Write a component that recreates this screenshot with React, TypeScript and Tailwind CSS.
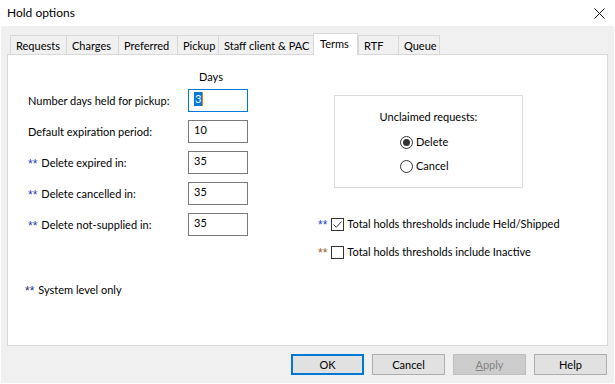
import React from 'react';

const tabs = [
  { label: 'Requests', w: 'w-[56px]' },
  { label: 'Charges', w: 'w-[52px]' },
  { label: 'Preferred', w: 'w-[59px]' },
  { label: 'Pickup', w: 'w-[41px]' },
  { label: 'Staff client & PAC', w: 'w-[95px]' },
  { label: 'Terms', w: 'w-[45px]', active: true },
  { label: 'RTF', w: 'w-[40px]' },
  { label: 'Queue', w: 'w-[42px]', last: true },
];

const dayRows = [
  { label: 'Number days held for pickup:', value: '3', focused: true },
  { label: 'Default expiration period:', value: '10' },
  { label: 'Delete expired in:', value: '35', sys: true },
  { label: 'Delete cancelled in:', value: '35', sys: true },
  { label: 'Delete not-supplied in:', value: '35', sys: true },
];

const Stars = ({ color = 'text-[#1f3fb0]' }: { color?: string }) => (
  <span
    className={`${color} text-[12px] leading-[12px] mr-[4px] pt-[2px]`}
    style={{ fontFamily: '"Liberation Sans", sans-serif' }}
  >
    **
  </span>
);

const Radio = ({ checked, label }: { checked?: boolean; label: string }) => (
  <div className="flex items-center h-[16px]">
    <span className="w-[13px] h-[13px] rounded-full border border-[#333] bg-white flex items-center justify-center">
      {checked && <span className="w-[7px] h-[7px] rounded-full bg-[#333]" />}
    </span>
    <span className="ml-[3px]">{label}</span>
  </div>
);

const Check = ({ checked }: { checked?: boolean }) => (
  <span className="w-[13px] h-[13px] border border-[#333] bg-white flex items-center justify-center">
    {checked && (
      <svg width="11" height="11" viewBox="0 0 11 11">
        <path d="M1.5 5.5 L4.3 8.3 L9.5 2.5" fill="none" stroke="#333" strokeWidth="1" />
      </svg>
    )}
  </span>
);

export default function App() {
  return (
    <div
      className="w-[615px] h-[384px] bg-[#f0f0f0] text-[11px] text-black leading-[16px] flex flex-col border-x border-b border-white whitespace-nowrap"
      style={{ fontFamily: 'Lato, "Noto Sans", sans-serif' }}
    >
      {/* title bar */}
      <div className="h-[26px] bg-white flex items-center justify-between pl-[7px] pr-[10px] -mx-px">
        <span className="text-[12px]">Hold options</span>
        <svg width="11" height="11" viewBox="0 0 11 11">
          <path d="M0.5 0.5 L10.5 10.5 M10.5 0.5 L0.5 10.5" stroke="#111" strokeWidth="1" />
        </svg>
      </div>

      {/* tabs */}
      <div className="flex items-end h-[21px] mt-[7px] ml-[9px] relative z-10">
        {tabs.map((t) =>
          t.active ? (
            <div
              key={t.label}
              className={`${t.w} h-[22px] bg-white border border-b-0 border-[#d9d9d9] pl-[6px] pt-[2px] -mb-px`}
            >
              {t.label}
            </div>
          ) : (
            <div
              key={t.label}
              className={`${t.w} h-[19px] bg-[#f0f0f0] border-t border-l ${t.last ? 'border-r' : ''} border-[#d9d9d9] pl-[5px] pt-[2px]`}
            >
              {t.label}
            </div>
          )
        )}
      </div>

      {/* panel */}
      <div className="mx-[6px] h-[292px] bg-white border border-[#d9d9d9] flex flex-col">
        <div className="flex">
          {/* left column */}
          <div className="ml-[20px] w-[220px] pt-[14px]">
            <div className="pl-[171px]">Days</div>
            <div className="mt-[4px] flex flex-col gap-[8px]">
              {dayRows.map((r) => (
                <div key={r.label} className="flex items-center h-[23px]">
                  <div className="w-[160px] flex items-center">
                    {r.sys && <Stars />}
                    <span>{r.label}</span>
                  </div>
                  <div
                    className={`w-[60px] h-[23px] bg-white border ${
                      r.focused ? 'border-[#0078d7]' : 'border-[#7a7a7a]'
                    } pl-[5px] pt-[2px] flex items-start`}
                  >
                    {r.focused ? (
                      <span className="flex">
                        <span className="bg-[#0078d7] text-white px-[1px] leading-[14px]">{r.value}</span>
                        <span className="w-px h-[14px] bg-[#e0801a]" />
                      </span>
                    ) : (
                      <span className="leading-[14px]">{r.value}</span>
                    )}
                  </div>
                </div>
              ))}
            </div>
          </div>

          {/* right column */}
          <div className="ml-[70px] pt-[40px]">
            <div className="ml-[16px] w-[189px] h-[93px] border border-[#dcdcdc] pt-[13px]">
              <div className="text-center">Unclaimed requests:</div>
              <div className="pl-[65px] mt-[9px] flex flex-col gap-[8px]">
                <Radio checked label="Delete" />
                <Radio label="Cancel" />
              </div>
            </div>
            <div className="mt-[28px] flex flex-col gap-[12px]">
              <div className="flex items-center h-[16px]">
                <Stars />
                <Check checked />
                <span className="ml-[3px]">Total holds thresholds include Held/Shipped</span>
              </div>
              <div className="flex items-center h-[16px]">
                <Stars color="text-[#9a5a20]" />
                <Check />
                <span className="ml-[3px]">Total holds thresholds include Inactive</span>
              </div>
            </div>
          </div>
        </div>

        <div className="ml-[17px] mt-[22px] flex items-center">
          <Stars color="text-[#1a2a80]" />
          <span>System level only</span>
        </div>
      </div>

      {/* buttons */}
      <div className="mt-[8px] flex justify-end gap-[8px] pr-[7px]">
        <button className="w-[73px] h-[21px] bg-[#e1e1e1] border-2 border-[#0078d7]">OK</button>
        <button className="w-[73px] h-[21px] bg-[#e1e1e1] border border-[#adadad]">Cancel</button>
        <button className="w-[73px] h-[21px] bg-[#cccccc] border border-[#bfbfbf] text-[#838383]">
          <span className="underline">A</span>pply
        </button>
        <button className="w-[73px] h-[21px] bg-[#e1e1e1] border border-[#adadad]">Help</button>
      </div>
    </div>
  );
}
